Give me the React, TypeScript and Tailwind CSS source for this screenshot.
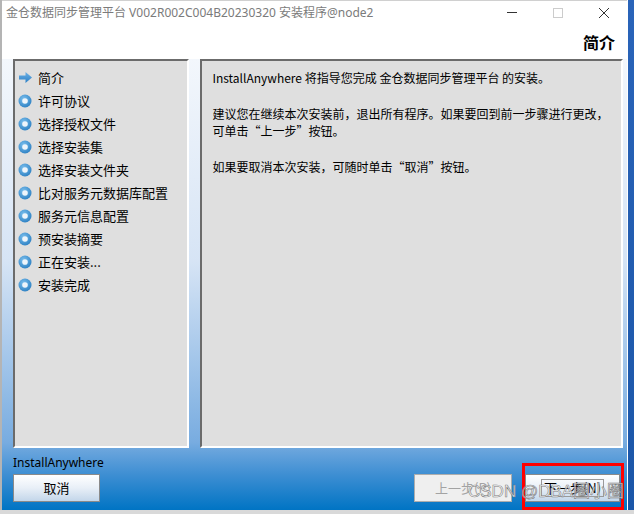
import React from 'react';

const steps = [
  '简介',
  '许可协议',
  '选择授权文件',
  '选择安装集',
  '选择安装文件夹',
  '比对服务元数据库配置',
  '服务元信息配置',
  '预安装摘要',
  '正在安装...',
  '安装完成',
];

const font = { fontFamily: '"Noto Sans CJK SC", "Noto Sans", sans-serif' };

function ArrowIcon() {
  return (
    <svg width="15" height="13" viewBox="0 0 15 13">
      <defs>
        <linearGradient id="arr" x1="0" y1="0" x2="0" y2="1">
          <stop offset="0" stopColor="#6fb2e6" />
          <stop offset="1" stopColor="#2a7fc6" />
        </linearGradient>
      </defs>
      <path d="M1 4.5 H7.5 V1 L14 6.5 L7.5 12 V8.5 H1 Z" fill="url(#arr)" />
    </svg>
  );
}

function DotIcon() {
  return (
    <svg width="14" height="14" viewBox="0 0 14 14">
      <defs>
        <radialGradient id="dot" cx="0.4" cy="0.35" r="0.7">
          <stop offset="0" stopColor="#7cc0ee" />
          <stop offset="1" stopColor="#2b7fc2" />
        </radialGradient>
      </defs>
      <circle cx="7" cy="7" r="6.5" fill="url(#dot)" />
      <circle cx="7" cy="7" r="2.8" fill="#eef5fb" />
    </svg>
  );
}

export default function App() {
  return (
    <div className="relative w-[634px] h-[514px] overflow-hidden bg-[#d9d9d9]" style={font}>
      <div className="flex h-[510px]">
        {/* window */}
        <div className="flex flex-col w-[627px] h-full border-l-2 border-[#b4b4b4] bg-white">
          {/* title bar */}
          <div className="flex items-center h-[24px] pl-[4px] border-t border-[#d0d0d0]">
            <span className="text-[12px] text-[#7b7b7b] whitespace-nowrap" style={{ fontFamily: '"Noto Sans", "Noto Sans CJK SC", sans-serif' }}>
              金仓数据同步管理平台 V002R002C004B20230320 安装程序@node2
            </span>
            <div className="ml-auto flex items-center h-full">
              <div className="w-[46px] flex justify-center">
                <div className="w-[10px] h-px bg-[#333]" />
              </div>
              <div className="w-[46px] flex justify-center">
                <div className="w-[10px] h-[10px] border border-[#cccccc]" />
              </div>
              <div className="w-[46px] flex justify-center">
                <svg width="12" height="12" viewBox="0 0 12 12">
                  <path d="M1 1 L11 11 M11 1 L1 11" stroke="#333" strokeWidth="1" />
                </svg>
              </div>
            </div>
          </div>
          {/* header */}
          <div className="flex items-center justify-end h-[35px] pr-[12px]">
            <span className="text-[16px] font-bold text-black">简介</span>
          </div>
          {/* body */}
          <div className="flex-1 flex flex-col pl-[11px] pr-[4px] bg-[linear-gradient(to_bottom,#f3f7fc_0%,#d6e4f5_45%,#78ace0_85%,#3f8fd3_92%,#0074c4_100%)]">
            <div className="flex gap-[11px] h-[389px]">
              {/* left steps panel */}
              <div className="w-[177px] h-full bg-[#dfdfdf] border-t-2 border-l-2 border-t-[#6b6b6b] border-l-[#6b6b6b] border-b-2 border-r-2 border-b-white border-r-white pt-[5px]">
                {steps.map((s, i) => (
                  <div key={s} className="flex items-center h-[23px]">
                    <div className="w-[20px] flex justify-center">
                      {i === 0 ? <ArrowIcon /> : <DotIcon />}
                    </div>
                    <span className="ml-[3px] text-[13px] text-black leading-none">{s}</span>
                  </div>
                ))}
              </div>
              {/* right content panel */}
              <div className="w-[424px] h-full bg-[#dfdfdf] border-t-2 border-l-2 border-t-[#6b6b6b] border-l-[#6b6b6b] border-b-2 border-r-2 border-b-white border-r-white pt-[8px] pl-[10px] text-[12px] leading-[17.5px] text-black">
                <p>InstallAnywhere 将指导您完成 金仓数据同步管理平台 的安装。</p>
                <p className="mt-[18px]">建议您在继续本次安装前，退出所有程序。如果要回到前一步骤进行更改，</p>
                <p>可单击“上一步”按钮。</p>
                <p className="mt-[18px]">如果要取消本次安装，可随时单击“取消”按钮。</p>
              </div>
            </div>
            <div className="mt-[7px] text-[12px] text-black leading-[16px]" style={{ fontFamily: '"Noto Sans", sans-serif' }}>
              InstallAnywhere
            </div>
            <div className="flex items-center mt-[3px]">
              <button className="w-[87px] h-[28px] border border-[#8a8a8a] bg-[linear-gradient(to_bottom,#ffffff,#e8eff7_50%,#c3d6ea)] text-[13px] text-black">
                取消
              </button>
              <button className="ml-auto w-[98px] h-[28px] border border-[#adadad] bg-[#efefef] text-[13px] text-[#a3a3a3]">
                上一步(P)
              </button>
              <div className="relative ml-[13px] mr-[3px]">
                <button className="w-[95px] h-[28px] border border-[#8a8a8a] bg-[linear-gradient(to_bottom,#ffffff,#e8eff7_50%,#c3d6ea)] text-[13px] text-black flex items-center justify-center">
                  <span className="px-[2px] border border-[#9a9a9a] leading-[16px]">下一步(N)</span>
                </button>
                <div className="absolute -left-[3px] -right-[4px] -top-[11px] -bottom-[8px] border-[3px] border-[#ff0000]" />
              </div>
            </div>
          </div>
        </div>
        {/* desktop strip at right */}
        <div className="flex-1 border-l border-white bg-[linear-gradient(to_bottom,#2a64b9,#1b56a8)]" />
      </div>
      {/* watermark */}
      <div className="absolute left-[468px] top-[483px] text-[17px] leading-[18px] text-white/80 whitespace-nowrap pointer-events-none" style={{ fontFamily: '"Liberation Sans", "Noto Sans CJK SC", sans-serif', WebkitTextStroke: '0.6px rgba(110,110,110,0.9)' }}>
        CSDN @DBA圈小圈
      </div>
    </div>
  );
}
